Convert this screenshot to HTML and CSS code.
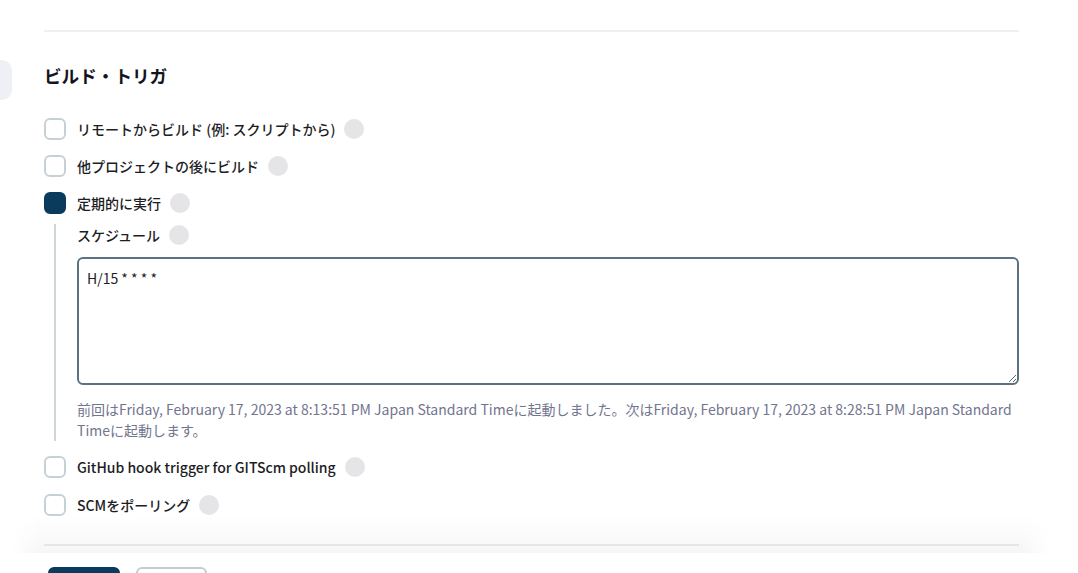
FILE: index.html
```html
<!DOCTYPE html>
<html lang="ja">
<head>
<meta charset="utf-8">
<title>ビルド・トリガ</title>
<link rel="stylesheet" href="styles.css">
</head>
<body>
<div class="page">
  <aside class="side"><div class="side-tab"></div></aside>
  <div class="content">
    <main class="main">
      <div class="divider"></div>
      <h2 class="section-title">ビルド・トリガ</h2>
      <div class="rows">
        <div class="row"><span class="cb"></span><span class="label">リモートからビルド (例: スクリプトから)</span><span class="help"></span></div>
        <div class="row"><span class="cb"></span><span class="label">他プロジェクトの後にビルド</span><span class="help"></span></div>
        <div class="row"><span class="cb cb-on"></span><span class="label">定期的に実行</span><span class="help"></span></div>
        <div class="nested">
          <div class="row"><span class="label">スケジュール</span><span class="help"></span></div>
          <textarea class="schedule">H/15 * * * *</textarea>
          <p class="desc">前回はFriday, February 17, 2023 at 8:13:51 PM Japan Standard Timeに起動しました。次はFriday, February 17, 2023 at 8:28:51 PM Japan Standard Timeに起動します。</p>
        </div>
        <div class="row row-after"><span class="cb"></span><span class="label">GitHub hook trigger for GITScm polling</span><span class="help"></span></div>
        <div class="row row-last"><span class="cb"></span><span class="label">SCMをポーリング</span><span class="help"></span></div>
      </div>
    </main>
    <footer class="sticker">
      <div class="shade"><div class="shade-line"></div></div>
      <div class="buttons">
        <span class="btn btn-primary"></span>
        <span class="btn btn-outline"></span>
      </div>
    </footer>
  </div>
</div>
</body>
</html>
```
FILE: styles.css
```css
* { box-sizing: border-box; }
html, body {
  margin: 0;
  padding: 0;
  background: #fff;
  overflow: hidden;
  height: 573px;
}
body {
  font-family: "Noto Sans CJK JP", "Noto Sans", sans-serif;
  color: #1d1d26;
}
.page {
  display: flex;
  align-items: flex-start;
  height: 573px;
  overflow: hidden;
}
.side {
  width: 12px;
  flex: none;
  padding-top: 60px;
}
.side-tab {
  height: 40px;
  background: #eef0f5;
  border-radius: 0 10px 10px 0;
}
.content {
  flex: 1;
  padding: 0 59px 0 32px;
}
.main {
  padding-top: 30px;
}
.divider {
  height: 2px;
  background: #f0f0f4;
}
.section-title {
  margin: 32px 0 0;
  font-size: 17.6px;
  line-height: 24px;
  font-weight: 700;
  color: #14141c;
}
.rows {
  margin-top: 30px;
  display: flex;
  flex-direction: column;
}
.row {
  display: flex;
  align-items: center;
  height: 22px;
  margin-bottom: 15px;
}
.cb {
  width: 22px;
  height: 22px;
  border: 2px solid #c7d0d5;
  border-radius: 6px;
  flex: none;
  margin-right: 11px;
  background: #fff;
}
.cb-on {
  background: #0b3b5c;
  border-color: #0b3b5c;
}
.label {
  font-size: 14px;
  font-weight: 500;
  color: #1d1d26;
  line-height: 22px;
}
.help {
  width: 20px;
  height: 20px;
  border-radius: 50%;
  background: #e5e5e7;
  margin-left: 9px;
  flex: none;
}
.nested {
  margin: -5px 0 0 10px;
  border-left: 2px solid #cfd6d9;
  padding-left: 21px;
  padding-bottom: 0;
}
.nested .row {
  margin-bottom: 11px;
}
.schedule {
  display: block;
  width: 100%;
  height: 128px;
  border: 2px solid #5b7381;
  border-radius: 6px;
  padding: 9px 8px;
  font-family: "Noto Sans CJK JP", "Noto Sans", sans-serif;
  font-size: 14px;
  line-height: 20px;
  color: #1d1d26;
  resize: vertical;
  margin: 0;
  outline: none;
}
.desc {
  margin: 14px 0 0;
  font-size: 14px;
  line-height: 21px;
  color: #72758e;
}
.row-after {
  margin-top: 15px;
  margin-bottom: 16px;
}
.row-last {
  margin-bottom: 0;
}
.sticker {
  margin: 0 -32px 0 -32px;
}
.shade {
  height: 37px;
  padding: 28px 32px 0;
  background: linear-gradient(to bottom, rgba(0,0,0,0) 0%, rgba(0,0,0,0.035) 100%);
  -webkit-mask-image: linear-gradient(to right, transparent 0, #000 30px, #000 calc(100% - 30px), transparent 100%);
  mask-image: linear-gradient(to right, transparent 0, #000 30px, #000 calc(100% - 30px), transparent 100%);
}
.shade-line {
  height: 2px;
  background: #e6e6e8;
}
.buttons {
  display: flex;
  gap: 16px;
  padding: 14px 0 0 36px;
  background: #fff;
}
.btn {
  display: block;
  width: 72px;
  height: 36px;
  border-radius: 6px;
}
.btn-primary {
  background: #0b3b5c;
}
.btn-outline {
  width: 71px;
  border: 2px solid #c5cbd1;
  background: #fff;
}
```
